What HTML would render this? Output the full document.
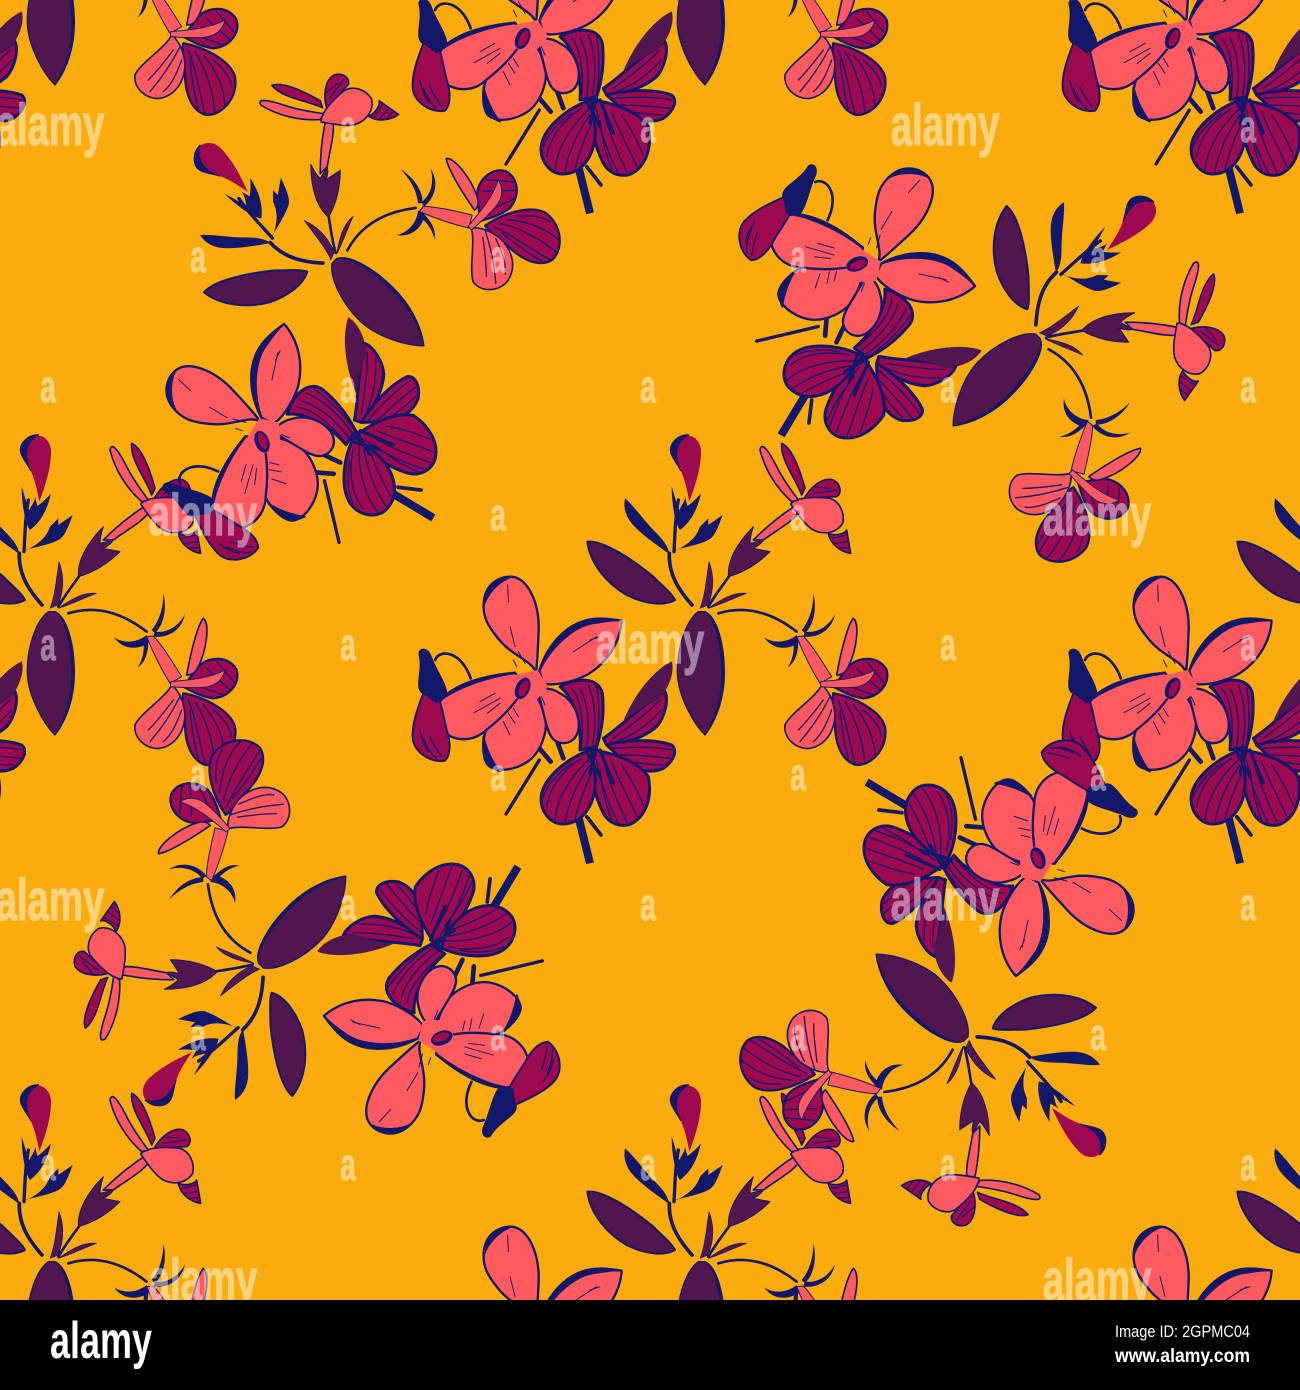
<!DOCTYPE html>
<html><head><meta charset="utf-8"><title>Floral pattern</title>
<style>html,body{margin:0;padding:0;background:#000;width:1300px;height:1390px;overflow:hidden}svg{display:block;overflow:hidden}
#w{width:1300px;height:1300px;overflow:hidden;position:relative}
.a{font-family:"Liberation Sans",sans-serif;font-weight:700;fill:#fff;stroke:#fff;stroke-width:1;opacity:.46}</style></head>
<body>
<div id="w">
<svg xmlns="http://www.w3.org/2000/svg" xmlns:xlink="http://www.w3.org/1999/xlink" width="1300" height="1300" viewBox="0 0 1300 1300">
<defs>
<!-- upper stems -->
<g id="k1" fill="none" stroke="#14186b" stroke-linejoin="round" stroke-linecap="round">
<path d="M105 690C120 655 185 665 212 745" stroke-width="8"/>
<path d="M955 550C1020 530 1100 535 1190 605" stroke-width="8"/>
<path d="M876 525C845 490 805 440 808 370" stroke-width="11"/><path d="M822 365C825 320 825 260 835 210" stroke-width="10"/>
<path d="M925 530C945 495 965 470 990 435" stroke-width="8"/>
</g>
<!-- lower stems, dark flower, lower coral petals -->
<g id="k2" stroke-linejoin="round" stroke-linecap="round">
<g fill="none" stroke="#14186b">
<path d="M318 1152L418 990" stroke-width="10"/><path d="M535 1160L570 1300" stroke-width="24" stroke-linecap="butt"/><path d="M560 1160L603 1215" stroke-width="11"/>
<path d="M418 955L452 995" stroke-width="14"/><path d="M472 935L490 985" stroke-width="14"/>
</g>
<g fill="#9e0a50" stroke="#14186b" stroke-width="9">
<path d="M480 770C530 742 595 740 607 790C614 850 606 900 590 950L540 960C545 900 530 810 480 770Z"/>
<path d="M610 925C650 900 720 830 795 785C806 810 795 860 770 890C730 925 670 940 620 945Z"/>
<path d="M620 945C670 930 760 925 815 945C832 960 825 990 790 1015C750 1032 720 1022 680 1000Z"/>
<path d="M580 960C640 970 710 990 745 1040C755 1090 745 1150 700 1178C670 1195 630 1185 610 1150C585 1100 565 1030 580 960Z"/>
<path d="M575 960C520 975 440 1030 425 1090C415 1140 450 1184 490 1182C550 1180 590 1120 585 1040Z"/>
</g>
<g fill="none" stroke="#14186b" stroke-width="4">
<path d="M540 775C565 820 570 890 560 950M565 765C585 810 590 880 578 945M515 775C545 810 550 880 545 945M590 770C598 820 600 880 590 940"/>
<path d="M640 925C680 895 730 860 780 810M650 935C700 915 745 885 785 840M670 940C715 925 750 905 775 880"/>
<path d="M640 955C700 950 770 950 815 960M660 975C710 975 770 980 810 985M690 995C720 1000 760 1005 790 1005"/>
<path d="M590 990C600 1060 630 1130 655 1180M610 985C625 1060 660 1130 680 1175M635 995C655 1050 690 1110 710 1160M665 1005C690 1040 715 1090 730 1125M600 1020C605 1080 620 1130 635 1170"/>
<path d="M565 990C510 1040 470 1110 465 1170M570 1005C530 1060 505 1120 495 1175M575 1030C550 1080 535 1130 525 1165M545 985C490 1020 450 1070 440 1130M515 1000C470 1030 440 1070 430 1100"/>
<path d="M560 965L600 1040M590 955L570 1030M600 960L640 1060" stroke-width="10"/>
</g>
<g fill="#ff5a5f" stroke="#14186b" stroke-width="7">
<path d="M385 775C340 800 295 835 268 878C243 920 245 985 265 1007C290 1027 340 1022 380 997C425 967 445 900 435 860C425 820 405 785 385 775Z"/>
<path d="M410 765C430 780 450 770 480 790C520 810 542 860 535 900C526 940 490 947 465 932C440 915 435 860 425 830C420 800 410 790 410 765Z"/>
<path d="M345 728C270 735 180 755 132 800C102 830 105 880 130 905C165 935 220 938 262 897C310 860 350 815 375 770Z"/>
</g>
</g>
<!-- top and right coral petals -->
<g id="k3" stroke-linejoin="round" stroke-linecap="round">
<g fill="#ff5a5f" stroke="#14186b" stroke-width="7">
<path d="M418 722C440 650 500 570 590 567C620 565 650 570 665 572C660 640 620 700 560 735C520 755 460 770 430 760Z"/>
<path d="M408 728C395 690 340 680 298 630C265 590 245 560 252 510C258 465 295 438 335 440C385 445 418 520 416 600C414 650 412 700 408 728Z"/>
</g>
<path d="M250 530C250 480 290 440 335 440C295 455 262 490 250 530Z" fill="#14186b" stroke="#14186b" stroke-width="5"/>
<path d="M420 720C440 650 500 570 590 565C630 563 650 570 665 572C640 570 610 575 580 580C520 590 455 650 420 720Z" fill="#14186b" stroke="#14186b" stroke-width="5"/>
<path d="M323 465L325 515M330 590L345 650M355 665L375 700M340 690L350 710M520 665L590 620M570 630L600 620" fill="none" stroke="#14186b" stroke-width="3"/>
</g>
<!-- flower centre, lower petal details, left bud -->
<g id="k4" stroke-linejoin="round" stroke-linecap="round">
<path d="M345 735L412 720L445 770L405 815L345 805Z" fill="#ff5a5f"/>
<g fill="#14186b">
<path d="M342 730C260 733 170 760 130 805C150 790 230 745 342 730Z" stroke="#14186b" stroke-width="6"/>
<path d="M250 920C245 970 260 1010 300 1025C280 1000 262 965 250 920Z" stroke="#14186b" stroke-width="5"/>
<ellipse cx="368" cy="775" rx="21" ry="34" transform="rotate(24 368 775)"/>
</g>
<ellipse cx="371" cy="775" rx="12" ry="26" transform="rotate(24 371 775)" fill="#9e0a50"/>
<g fill="none" stroke="#14186b" stroke-width="3">
<path d="M222 848L300 805M285 790L240 815M300 820L262 850"/>
<path d="M310 875L330 915M325 850L345 880M340 835L355 860"/>
<path d="M424 800L435 825"/>
</g>
<path d="M70 790C55 830 35 880 38 925C42 965 90 1000 135 992C155 970 150 930 140 900C130 860 125 820 110 790Z" fill="#9e0a50" stroke="#14186b" stroke-width="6"/>
<path d="M70 925C80 950 95 975 110 985M90 920C100 945 115 965 125 980M60 900C65 925 70 945 85 965" fill="none" stroke="#14186b" stroke-width="4"/>
<path d="M55 670C58 650 85 650 95 680C110 720 140 760 142 790L110 820L75 795C60 790 52 780 55 750C58 720 62 700 55 670Z" fill="#14186b"/>
</g>
<!-- leaves, sprigs, bud, top small flower -->
<g id="k7" stroke-linejoin="round" stroke-linecap="round">
<g fill="#521650" stroke="#14186b">
<path d="M672 870C700 800 760 720 815 695C825 730 800 790 770 810C730 830 700 850 672 870Z" stroke-width="1"/>
<path d="M895 545C860 570 830 650 832 730C835 800 880 880 915 915C950 870 975 800 973 720C972 640 950 560 915 545Z" stroke-width="4"/>
<path d="M562 335C610 330 700 390 760 440C790 470 815 490 825 510C790 530 730 520 680 495C620 460 570 400 562 335Z" stroke-width="6"/>
<path d="M900 535C915 500 920 440 927 395C940 430 945 470 925 525Z" stroke-width="2"/>
<path d="M925 535C960 510 1000 485 1040 490C1000 505 960 525 925 535Z" stroke-width="2"/>
</g>
<path d="M915 545C950 560 972 640 973 720C975 800 950 870 915 915C955 840 968 780 962 700C960 640 945 570 915 545Z" fill="#14186b"/>
<g fill="#14186b">
<path d="M675 205C700 225 730 270 765 305C790 330 805 350 808 372C770 345 720 310 695 280C675 255 670 230 675 205Z"/>
<path d="M815 170C825 200 830 225 838 240C845 225 855 215 855 200L862 228C875 220 895 200 903 190C895 225 880 270 840 300C825 280 815 220 815 170Z"/>
<path d="M830 360C870 340 890 320 900 290L925 265L925 285L968 255C955 290 945 320 925 330C895 345 860 350 825 360Z"/>
<path d="M1205 600C1230 570 1240 530 1240 490C1250 530 1245 580 1215 610Z"/>
<path d="M1215 605C1250 610 1285 590 1305 553C1295 600 1255 625 1210 620Z"/>
<path d="M1190 615C1160 640 1120 640 1092 622C1120 660 1160 660 1195 640Z"/>
<path d="M1180 630C1185 665 1175 695 1163 712C1190 695 1195 660 1195 630Z"/>
</g>
<path d="M840 18C870 8 900 25 903 60C905 110 885 170 868 215C860 170 850 130 830 100C810 70 805 40 840 18Z" fill="#9e0a50"/>
<path d="M866 14C830 14 802 45 814 74C822 92 832 102 842 122C828 90 815 45 866 14Z" fill="#14186b" stroke="#14186b" stroke-width="3"/>
<path d="M985 430C985 390 1010 340 1060 290C1050 320 1050 335 1050 340L1090 330C1085 340 1070 350 1060 355L1110 365C1080 395 1040 425 985 440Z" fill="#521650" stroke="#14186b" stroke-width="3"/>
<g fill="#ff5a5f" stroke="#14186b" stroke-width="5">
<path d="M1060 330C1100 290 1150 250 1190 225L1195 250C1170 280 1130 300 1090 330Z"/>
<path d="M1205 195C1190 150 1140 90 1145 40C1170 50 1195 100 1215 175Z" fill="#9e0a50"/>
<path d="M1210 210C1230 170 1270 140 1300 150C1325 165 1325 190 1310 200C1280 200 1240 205 1210 212Z" fill="#9e0a50"/>
<path d="M1285 310C1310 320 1335 310 1340 300L1352 370C1320 365 1290 340 1285 310Z" fill="#9e0a50"/>
<path d="M1172 222C1190 200 1250 200 1290 205C1320 215 1335 250 1328 280C1310 310 1270 315 1240 300C1215 285 1195 255 1172 222Z"/>
<path d="M1175 215C1130 175 1095 120 1080 60C1085 30 1110 70 1130 110C1150 150 1180 190 1195 210Z"/>
</g>
<path d="M1295 325L1340 315M1305 340L1345 335M1320 355L1348 352M1240 170L1290 175M1240 190L1310 180" stroke="#14186b" stroke-width="3.5" fill="none"/>
</g>
<!-- right small flower, lower petals -->
<g id="k5" stroke-linejoin="round" stroke-linecap="round">
<g fill="#9e0a50" stroke="#14186b" stroke-width="7">
<path d="M1345 710C1380 675 1440 680 1460 720C1470 760 1440 800 1390 805C1350 800 1320 780 1300 770Z"/>
<path d="M1300 790C1360 800 1440 840 1455 890C1465 950 1420 1005 1370 1005C1325 995 1305 940 1305 880C1300 850 1295 810 1300 790Z"/>
</g>
<g fill="none" stroke="#14186b" stroke-width="4">
<path d="M1315 810C1340 870 1350 950 1365 1000M1335 815C1370 870 1390 940 1395 1000M1360 825C1400 870 1425 930 1425 980M1390 840C1420 865 1440 890 1445 920M1320 840C1325 890 1335 950 1345 985"/>
<path d="M1370 715L1440 780M1400 695L1455 760M1350 770L1420 795"/>
</g>
<path d="M1265 765C1250 800 1170 850 1155 885C1150 925 1190 960 1230 955C1280 945 1305 900 1305 850C1300 810 1285 780 1265 765Z" fill="#ff5a5f" stroke="#14186b" stroke-width="5"/>
<path d="M1290 800C1265 850 1230 900 1200 935M1270 810C1240 850 1215 880 1195 900M1295 840C1280 880 1265 915 1240 935" stroke="#14186b" stroke-width="4" fill="none"/>
</g>
<!-- right small flower, tube and upper petals -->
<g id="k6" fill="#ff5a5f" stroke="#14186b" stroke-linejoin="round" stroke-linecap="round">
<path d="M1190 620L1210 618C1240 650 1270 700 1295 740L1260 760C1235 720 1210 670 1190 620Z" stroke-width="3"/>
<path d="M1310 735C1320 680 1340 590 1360 565C1380 580 1370 660 1345 710C1335 730 1325 735 1310 735Z" stroke-width="5"/>
<path d="M1262 755C1320 750 1380 745 1425 720C1420 745 1400 770 1360 772C1320 775 1290 772 1262 770Z" stroke-width="3"/>
</g>
<g id="s" transform="scale(.3333) translate(-900 -540)">
<use xlink:href="#k1" href="#k1"/><use xlink:href="#k2" href="#k2"/><use xlink:href="#k3" href="#k3"/><use xlink:href="#k4" href="#k4"/><use xlink:href="#k7" href="#k7"/><use xlink:href="#k5" href="#k5"/><use xlink:href="#k6" href="#k6"/>
</g>
<g id="b" transform="scale(.3333) translate(-900 -540)">
<use xlink:href="#k1" href="#k1"/><use xlink:href="#k3" href="#k3"/><use xlink:href="#k7" href="#k7"/><use xlink:href="#k6" href="#k6"/>
</g>
</defs>
<rect width="1300" height="1300" fill="#faac0e"/>
<use xlink:href="#s" href="#s" transform="translate(50 -40)"/>
<use xlink:href="#s" href="#s" transform="translate(700 -40)"/>
<use xlink:href="#s" href="#s" transform="translate(1350 -40)"/>
<use xlink:href="#s" href="#s" transform="translate(50 610)"/>
<use xlink:href="#s" href="#s" transform="translate(700 610)"/>
<use xlink:href="#s" href="#s" transform="translate(1350 610)"/>
<use xlink:href="#b" href="#b" transform="translate(50 1260)"/>
<use xlink:href="#b" href="#b" transform="translate(700 1260)"/>
<use xlink:href="#b" href="#b" transform="translate(1350 1260)"/>
<use xlink:href="#s" href="#s" transform="translate(332 261) rotate(-45)"/>
<use xlink:href="#s" href="#s" transform="translate(1038 334) rotate(45)"/>
<use xlink:href="#s" href="#s" transform="translate(261 968) rotate(-135)"/>
<use xlink:href="#s" href="#s" transform="translate(968 1039) rotate(135)"/>
<g class="a" font-size="45" text-anchor="middle">
<text transform="translate(348 142) scale(.62 1)">a</text><text transform="translate(648 142) scale(.62 1)">a</text><text transform="translate(1248 142) scale(.62 1)">a</text>
<text transform="translate(198 272) scale(.62 1)">a</text><text transform="translate(498 272) scale(.62 1)">a</text><text transform="translate(798 272) scale(.62 1)">a</text><text transform="translate(1098 272) scale(.62 1)">a</text>
<text transform="translate(48 402) scale(.62 1)">a</text><text transform="translate(348 402) scale(.62 1)">a</text><text transform="translate(648 402) scale(.62 1)">a</text><text transform="translate(948 402) scale(.62 1)">a</text><text transform="translate(1248 402) scale(.62 1)">a</text>
<text transform="translate(498 530) scale(.62 1)">a</text><text transform="translate(798 530) scale(.62 1)">a</text>
<text transform="translate(48 660) scale(.62 1)">a</text><text transform="translate(348 660) scale(.62 1)">a</text><text transform="translate(948 660) scale(.62 1)">a</text><text transform="translate(1248 660) scale(.62 1)">a</text>
<text transform="translate(198 790) scale(.62 1)">a</text><text transform="translate(498 790) scale(.62 1)">a</text><text transform="translate(798 790) scale(.62 1)">a</text><text transform="translate(1098 790) scale(.62 1)">a</text>
<text transform="translate(348 920) scale(.62 1)">a</text><text transform="translate(648 920) scale(.62 1)">a</text><text transform="translate(1248 920) scale(.62 1)">a</text>
<text transform="translate(198 1050) scale(.62 1)">a</text><text transform="translate(498 1050) scale(.62 1)">a</text><text transform="translate(798 1050) scale(.62 1)">a</text><text transform="translate(1098 1050) scale(.62 1)">a</text>
<text transform="translate(48 1180) scale(.62 1)">a</text><text transform="translate(348 1180) scale(.62 1)">a</text><text transform="translate(648 1180) scale(.62 1)">a</text><text transform="translate(948 1180) scale(.62 1)">a</text><text transform="translate(1248 1180) scale(.62 1)">a</text>
</g>
<g class="a" font-size="58" text-anchor="middle" style="stroke-width:1.2">
<text transform="translate(50 145) scale(.66 1)">alamy</text>
<text transform="translate(945 145) scale(.66 1)">alamy</text>
<text transform="translate(203 535) scale(.66 1)">alamy</text>
<text transform="translate(1097 535) scale(.66 1)">alamy</text>
<text transform="translate(650 663) scale(.66 1)">alamy</text>
<text transform="translate(50 920) scale(.66 1)">alamy</text>
<text transform="translate(945 920) scale(.66 1)">alamy</text>
<text transform="translate(203 1300) scale(.66 1)">alamy</text>
<text transform="translate(1097 1300) scale(.66 1)">alamy</text>
</g>
</svg>
</div>
<svg xmlns="http://www.w3.org/2000/svg" width="1300" height="90" viewBox="0 1300 1300 90">
<rect y="1300" width="1300" height="90" fill="#000"/>
<g font-family="Liberation Sans, sans-serif" fill="#fff">
<text x="50" y="1358" font-size="52" font-weight="700" textLength="102" lengthAdjust="spacingAndGlyphs">alamy</text>
<text x="1115" y="1337" font-size="17" textLength="135" lengthAdjust="spacingAndGlyphs">Image ID: 2GPMC04</text>
<text x="1115" y="1362" font-size="19" font-weight="700" textLength="135" lengthAdjust="spacingAndGlyphs">www.alamy.com</text>
</g>
</svg>
</body></html>
